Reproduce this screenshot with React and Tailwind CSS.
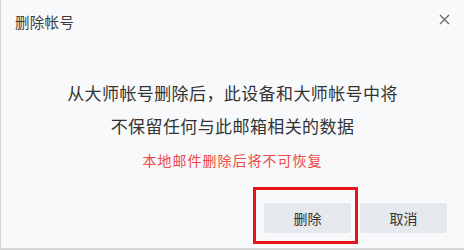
import React from 'react';

const font = { fontFamily: '"Noto Sans CJK SC", "Noto Sans", sans-serif' };

export default function App() {
  return (
    <div
      className="w-[464px] h-[250px] bg-[#f8f9fb] border-l border-b-2 border-[#d6d8dc] flex flex-col text-[#333]"
      style={font}
    >
      <div className="h-[44px] pl-[14px] pr-[14px] flex items-center justify-between">
        <span className="text-[14.5px] text-[#3a3a3a] tracking-[0.3px]">删除帐号</span>
        <button className="w-[12px] h-[12px] flex items-center justify-center -mt-[6px] mr-[0px]">
          <svg width="11" height="11" viewBox="0 0 11 11">
            <path d="M1 1 L10 10 M10 1 L1 10" stroke="#6b6b6b" strokeWidth="1.4" fill="none" />
          </svg>
        </button>
      </div>
      <div className="mt-[32px] flex flex-col items-center">
        <p className="text-[17px] leading-[33px] tracking-[0.4px] text-center text-[#333]">
          从大师帐号删除后，此设备和大师帐号中将
          <br />
          不保留任何与此邮箱相关的数据
        </p>
        <p className="mt-[8px] text-[14px] leading-[20px] tracking-[1px] text-[#f04848]">
          本地邮件删除后将不可恢复
        </p>
      </div>
      <div className="mt-[33px] flex justify-end gap-[9px] pr-[17px]">
        <div className="relative">
          <button className="w-[87px] h-[30px] rounded-[3px] bg-[#e5e8ed] text-[14px] text-[#333]">删除</button>
          <div className="absolute left-[-11px] top-[-16px] w-[105px] h-[57px] border-[3px] border-[#e8121a]" />
        </div>
        <button className="w-[87px] h-[30px] rounded-[3px] bg-[#e5e8ed] text-[14px] text-[#333]">取消</button>
      </div>
    </div>
  );
}
